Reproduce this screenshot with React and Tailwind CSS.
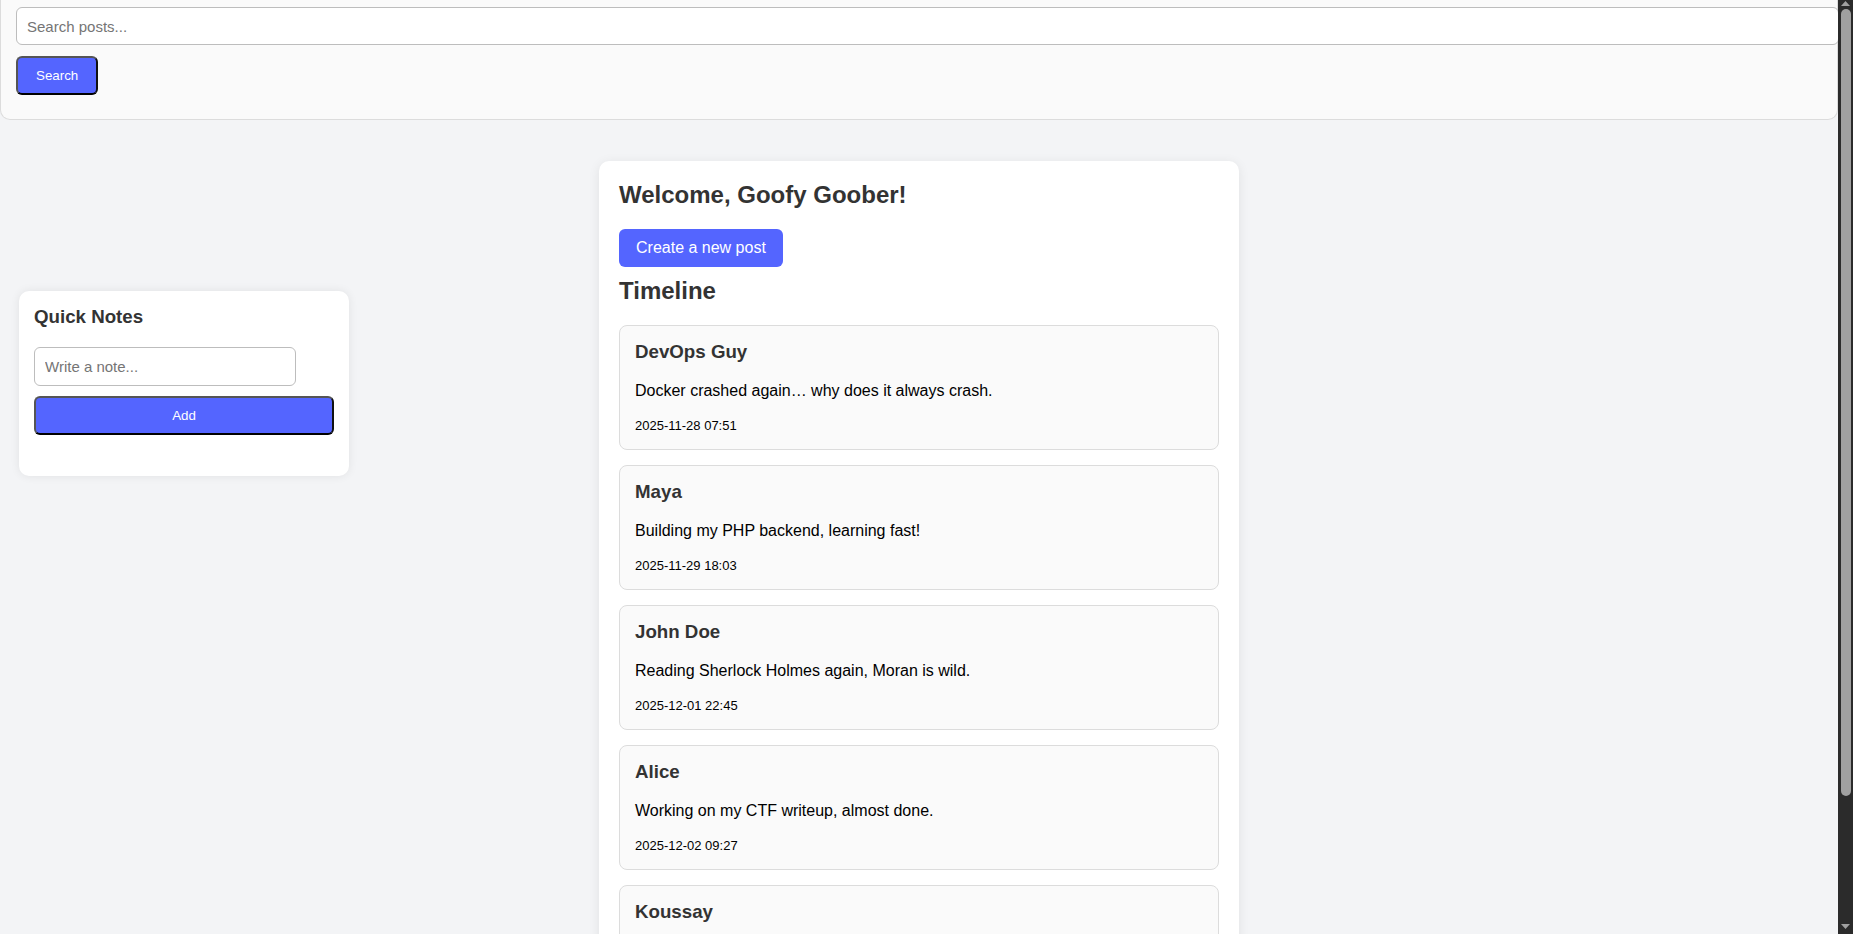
import React, { useState } from "react";

const posts = [
  { id: 1, author: "DevOps Guy", body: "Docker crashed again… why does it always crash.", date: "2025-11-28 07:51" },
  { id: 2, author: "Maya", body: "Building my PHP backend, learning fast!", date: "2025-11-29 18:03" },
  { id: 3, author: "John Doe", body: "Reading Sherlock Holmes again, Moran is wild.", date: "2025-12-01 22:45" },
  { id: 4, author: "Alice", body: "Working on my CTF writeup, almost done.", date: "2025-12-02 09:27" },
  { id: 5, author: "Koussay", body: "Finally got the login page working.", date: "2025-12-03 14:12" },
];

export default function App() {
  const [query, setQuery] = useState("");
  const [note, setNote] = useState("");
  const [notes, setNotes] = useState([]);

  const addNote = () => {
    if (!note.trim()) return;
    setNotes([...notes, note.trim()]);
    setNote("");
  };

  return (
    <div className="flex h-screen overflow-hidden bg-[#f3f4f6] font-['Liberation_Sans',Arial,sans-serif]">
      <div className="flex-1 min-w-0 overflow-y-auto [scrollbar-width:none]">
        {/* search bar */}
        <div className="bg-[#fafafa] border-x border-b border-[#dcdcdc] rounded-b-[10px] pl-[15px] pt-[7px] pb-[24px]">
          <input
            type="text"
            value={query}
            onChange={(e) => setQuery(e.target.value)}
            placeholder="Search posts..."
            className="block w-[calc(100%+2px)] h-[38px] px-[10px] bg-white border border-[#bdbdbd] rounded-[6px] text-[15px] text-black placeholder:text-[#757575] outline-none"
          />
          <button className="mt-[11px] h-[39px] px-[18px] bg-[#5465ff] text-white text-[13.33px] rounded-[6px] border-2 border-t-[#555] border-l-[#555] border-r-[#111] border-b-[#000]">
            Search
          </button>
        </div>

        <div className="grid grid-cols-[1fr_640px_1fr]">
          {/* quick notes */}
          <div>
            <div className="ml-[19px] mt-[171px] w-[330px] bg-white rounded-[10px] shadow-[0_0_10px_rgba(0,0,0,0.08)] px-[15px] pt-[15px] pb-[41px]">
              <h3 className="text-[18.72px] leading-[21px] font-bold text-[#333]">Quick Notes</h3>
              <input
                type="text"
                value={note}
                onChange={(e) => setNote(e.target.value)}
                placeholder="Write a note..."
                className="block mt-[20px] w-[262px] h-[39px] px-[10px] border border-[#bdbdbd] rounded-[6px] text-[15px] text-black placeholder:text-[#757575] outline-none"
              />
              <button
                onClick={addNote}
                className="block mt-[10px] w-full h-[39px] bg-[#5465ff] text-white text-[13.33px] rounded-[6px] border-2 border-t-[#555] border-l-[#555] border-r-[#111] border-b-[#000]"
              >
                Add
              </button>
              {notes.length > 0 && (
                <ul className="mt-3 text-sm text-[#333]">
                  {notes.map((n, i) => (
                    <li key={i}>{n}</li>
                  ))}
                </ul>
              )}
            </div>
          </div>

          {/* main feed */}
          <div className="mt-[41px] mb-[49px] bg-white rounded-[10px] shadow-[0_2px_12px_rgba(0,0,0,0.08)] p-[20px]">
            <h2 className="text-[24px] leading-[28px] font-bold text-[#333]">Welcome, Goofy Goober!</h2>
            <button className="mt-[20px] h-[38px] px-[17px] bg-[#5465ff] text-white text-[16px] rounded-[6px]">
              Create a new post
            </button>
            <h2 className="mt-[10px] text-[24px] leading-[28px] font-bold text-[#333]">Timeline</h2>

            <div className="mt-[20px] flex flex-col gap-[15px]">
              {posts.map((post) => (
                <div key={post.id} className="bg-[#fafafa] border border-[#dcdcdc] rounded-[8px] pt-[15px] px-[15px] pb-[14px]">
                  <h3 className="text-[18.72px] leading-[21px] font-bold text-[#333]">{post.author}</h3>
                  <p className="mt-[20px] text-[16px] leading-[18px] text-black">{post.body}</p>
                  <div className="mt-[16px] text-[16px] leading-[18px] text-black">
                    <span className="text-[13px]">{post.date}</span>
                  </div>
                </div>
              ))}
            </div>
          </div>

          <div></div>
        </div>
      </div>

      {/* scrollbar */}
      <div className="w-[15px] shrink-0 bg-[#2b2b2b] flex flex-col items-center">
        <svg width="9" height="5" viewBox="0 0 9 5" className="mt-[1px] shrink-0">
          <path d="M4.5 0 L9 5 L0 5 Z" fill="#a0a0a0" />
        </svg>
        <div className="mt-[3px] w-[10px] h-[787px] rounded-full bg-[#a0a0a0]"></div>
        <div className="flex-1"></div>
        <svg width="9" height="5" viewBox="0 0 9 5" className="mb-[5px] shrink-0">
          <path d="M0 0 L9 0 L4.5 5 Z" fill="#a0a0a0" />
        </svg>
      </div>
    </div>
  );
}
